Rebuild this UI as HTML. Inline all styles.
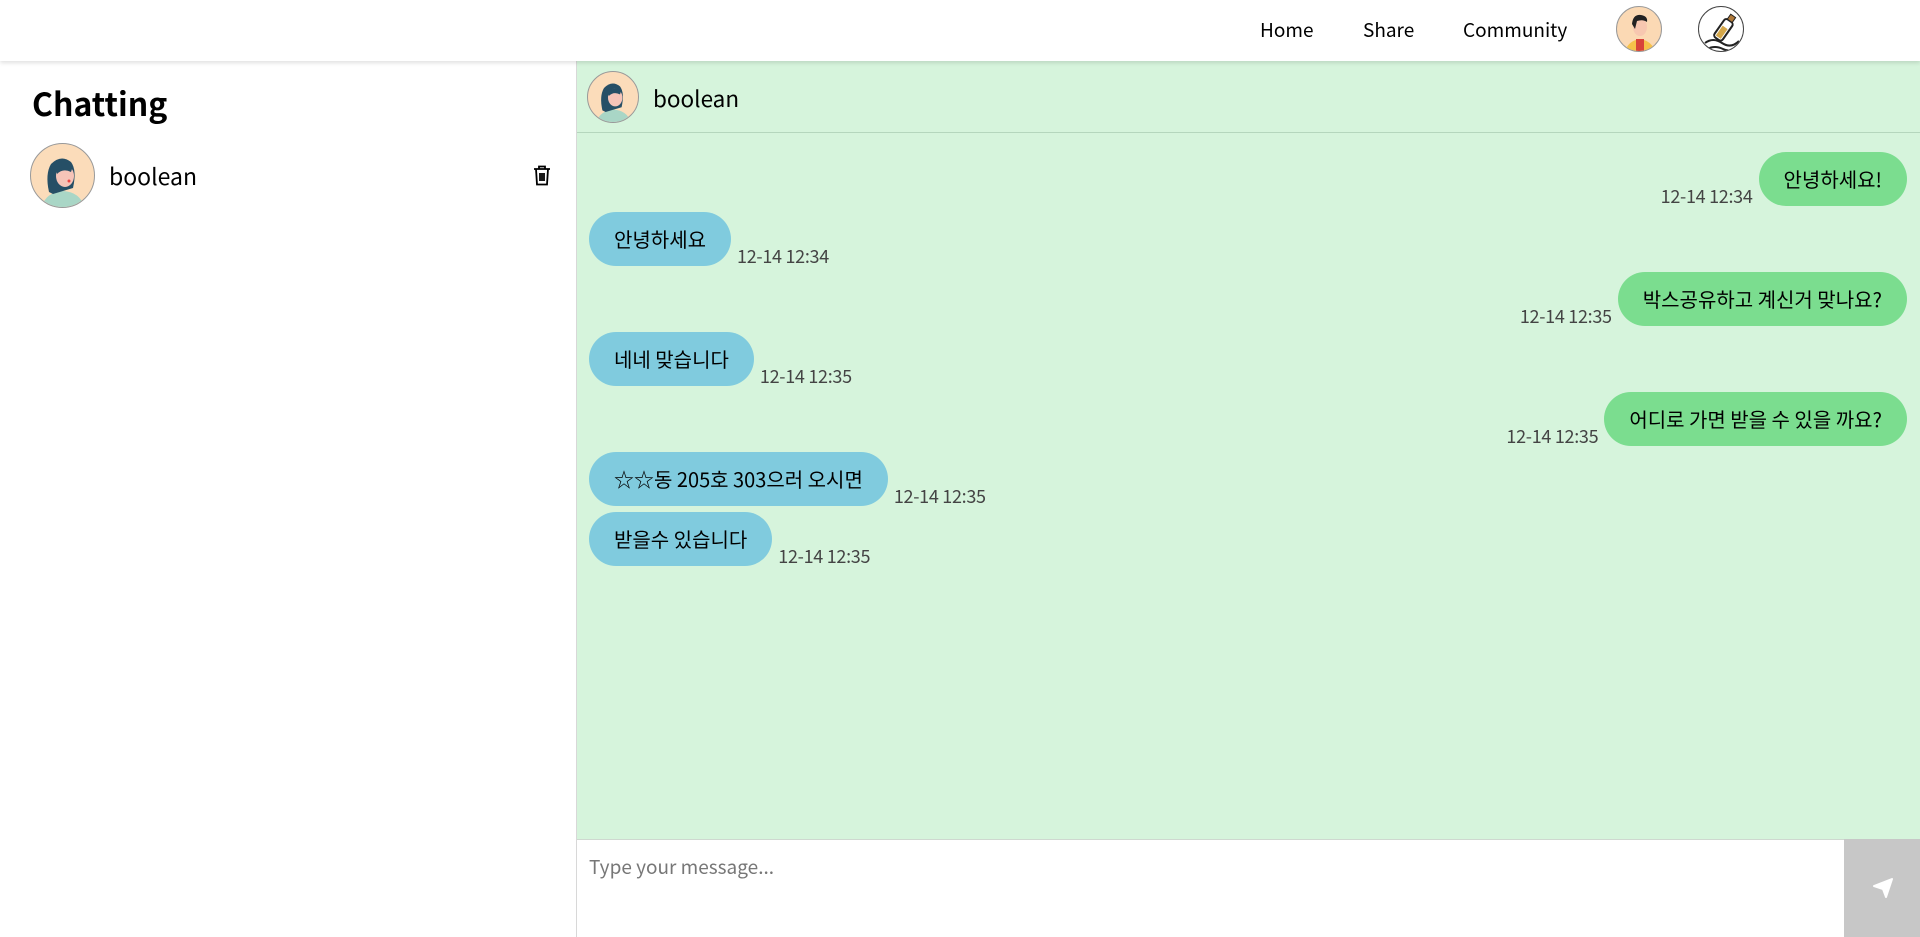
<!DOCTYPE html>
<html><head><meta charset="utf-8"><style>
*{box-sizing:border-box;margin:0;padding:0}
body{width:1920px;height:937px;overflow:hidden;background:#fff;font-family:"Noto Sans CJK KR","Liberation Sans",sans-serif;color:#000;position:relative}
.hdr{position:absolute;left:0;top:0;width:1920px;height:61px;background:#fff;box-shadow:0 2px 4px rgba(0,0,0,.12);z-index:5}
.nav{position:absolute;top:18px;font-size:19px;line-height:24px}
.oval{position:absolute;border-radius:50%;overflow:hidden;border:1px solid #999}
.left{position:absolute;left:0;top:61px;width:577px;height:876px;border-right:1px solid #d8d8d8;background:#fff}
.left h1{position:absolute;left:32px;top:20px;font-size:32px;font-weight:700;line-height:44px}
.chat{position:absolute;left:577px;top:61px;width:1343px;height:778px;background:#d6f4dc}
.ch{height:72px;border-bottom:1px solid #b5d6bd;position:relative}
.name{font-size:23px;line-height:30px}
.msgs{padding:19px 13px 0 12px;display:flex;flex-direction:column;gap:6px}
.row{display:flex;align-items:flex-end}
.row.r{justify-content:flex-end}
.b{height:54px;border-radius:27px;padding:0 25px;font-size:20px;line-height:54px;white-space:nowrap}
.l .b{background:#80cbde}
.r .b{background:#7bdd8f}
.t{font-size:18px;color:#444;line-height:22px;margin:0 6px;position:relative;top:1px;letter-spacing:-0.3px}
.inp{position:absolute;left:577px;top:839px;width:1267px;height:98px;background:#fff;border-top:1px solid #cfd8d0}
.inp span{position:absolute;left:12px;top:13px;font-size:19px;color:#777}
.send{position:absolute;left:1844px;top:839px;width:76px;height:98px;background:#c7c7c7}
</style></head><body>
<div class="hdr">
<div class="nav" style="left:1260px">Home</div>
<div class="nav" style="left:1363px">Share</div>
<div class="nav" style="left:1463px">Community</div>
<div class="oval" style="left:1616px;top:6px;width:46px;height:46px;background:#fbd9b4">
<svg width="46" height="46" viewBox="0 0 46 46"><path d="M8 46 Q10 34 23 32 Q36 34 38 46Z" fill="#f6c24a"/><rect x="19" y="32" width="8" height="14" fill="#d8443a"/><ellipse cx="23" cy="20" rx="7" ry="9" fill="#f7c7b0"/><path d="M15 17 Q16 7 24 8 Q31 9 30 15 Q26 12 20 14 L18 22 Z" fill="#222"/></svg></div>
<div class="oval" style="left:1698px;top:6px;width:46px;height:46px;background:#fff;border-color:#444">
<svg width="46" height="46" viewBox="0 0 46 46"><path d="M6 36 Q14 30 23 36 T40 34 M8 42 Q16 38 24 42 T40 40" stroke="#222" stroke-width="2" fill="none"/><g transform="rotate(35 25 22)"><rect x="20" y="12" width="10" height="22" rx="3" fill="#fff" stroke="#222" stroke-width="2"/><rect x="22" y="20" width="6" height="12" fill="#d4a74a"/><rect x="22" y="6" width="6" height="6" fill="#b07a3a" stroke="#222"/></g></svg></div>
</div>
<div class="left">
<h1>Chatting</h1>
<div class="oval" style="left:30px;top:82px;width:65px;height:65px;background:#fbdcba">
<svg width="65" height="65" viewBox="0 0 65 65"><path d="M10 65 Q14 48 32 47 Q50 48 54 65Z" fill="#a9d6c6"/><path d="M18 48 Q14 30 20 20 Q30 10 40 18 Q46 26 42 44 L22 50Z" fill="#264f66"/><ellipse cx="34" cy="32" rx="9" ry="11" fill="#f6c4b8"/><path d="M25 26 Q30 18 42 22 L40 28 Q32 24 26 30Z" fill="#264f66"/><circle cx="38" cy="37" r="1.5" fill="#e44"/></svg></div>
<div class="name" style="position:absolute;left:109px;top:99px">boolean</div>
<svg style="position:absolute;left:533px;top:104px" width="18" height="21" viewBox="0 0 18 21"><path d="M1 4h16M6 4V1.5h6V4M3 4l1 15.5h10L15 4M7 8v8M9 8v8M11 8v8" stroke="#000" stroke-width="1.8" fill="none"/></svg>
</div>
<div class="chat">
<div class="ch">
<div class="oval" style="left:10px;top:10px;width:52px;height:52px;background:#fbdcba">
<svg width="52" height="52" viewBox="0 0 65 65"><path d="M10 65 Q14 48 32 47 Q50 48 54 65Z" fill="#a9d6c6"/><path d="M18 48 Q14 30 20 20 Q30 10 40 18 Q46 26 42 44 L22 50Z" fill="#264f66"/><ellipse cx="34" cy="32" rx="9" ry="11" fill="#f6c4b8"/><path d="M25 26 Q30 18 42 22 L40 28 Q32 24 26 30Z" fill="#264f66"/></svg></div>
<div class="name" style="position:absolute;left:76px;top:22px;font-size:22.5px">boolean</div>
</div>
<div class="msgs">
<div class="row r"><span class="t">12-14 12:34</span><div class="b">안녕하세요!</div></div>
<div class="row l"><div class="b">안녕하세요</div><span class="t">12-14 12:34</span></div>
<div class="row r"><span class="t">12-14 12:35</span><div class="b">박스공유하고 계신거 맞나요?</div></div>
<div class="row l"><div class="b">네네 맞습니다</div><span class="t">12-14 12:35</span></div>
<div class="row r"><span class="t">12-14 12:35</span><div class="b">어디로 가면 받을 수 있을 까요?</div></div>
<div class="row l"><div class="b">☆☆동 205호 303으러 오시면</div><span class="t">12-14 12:35</span></div>
<div class="row l"><div class="b">받을수 있습니다</div><span class="t">12-14 12:35</span></div>
</div>
</div>
<div class="inp"><span>Type your message...</span></div>
<div class="send"><svg style="position:absolute;left:28px;top:38px" width="22" height="22" viewBox="0 0 22 22"><path d="M2 9 L20 2 L14 20 L11 12 Z" fill="#fff" stroke="#fff" stroke-width="2" stroke-linejoin="round"/></svg></div>
</body></html>
